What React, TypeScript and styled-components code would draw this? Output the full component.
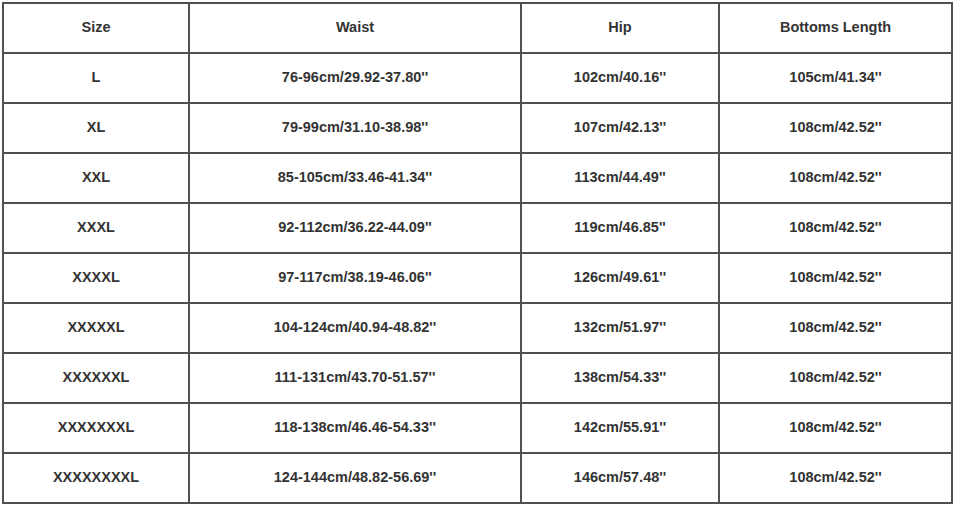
import React from "react";
import styled, { createGlobalStyle } from "styled-components";

const Global = createGlobalStyle`
  html, body { margin: 0; padding: 0; background: #ffffff; }
  body { font-family: "Liberation Sans", Arial, sans-serif; }
`;

const Page = styled.div`
  padding: 2px 0 0 2px;
`;

const Table = styled.div`
  display: grid;
  grid-template-columns: 184px 330px 196px 231px;
  grid-auto-rows: 48px;
  gap: 2px;
  width: max-content;
  background: #505050;
  border: 2px solid #505050;
`;

const Cell = styled.div`
  display: flex;
  align-items: center;
  justify-content: center;
  padding-bottom: 2px;
  box-sizing: border-box;
  background: #ffffff;
  color: #333333;
  font-family: "Liberation Sans", Arial, sans-serif;
  font-weight: bold;
  font-size: 14.5px;
  white-space: nowrap;
`;

const headers = ["Size", "Waist", "Hip", "Bottoms Length"];

const rows: string[][] = [
  ["L", "76-96cm/29.92-37.80''", "102cm/40.16''", "105cm/41.34''"],
  ["XL", "79-99cm/31.10-38.98''", "107cm/42.13''", "108cm/42.52''"],
  ["XXL", "85-105cm/33.46-41.34''", "113cm/44.49''", "108cm/42.52''"],
  ["XXXL", "92-112cm/36.22-44.09''", "119cm/46.85''", "108cm/42.52''"],
  ["XXXXL", "97-117cm/38.19-46.06''", "126cm/49.61''", "108cm/42.52''"],
  ["XXXXXL", "104-124cm/40.94-48.82''", "132cm/51.97''", "108cm/42.52''"],
  ["XXXXXXL", "111-131cm/43.70-51.57''", "138cm/54.33''", "108cm/42.52''"],
  ["XXXXXXXL", "118-138cm/46.46-54.33''", "142cm/55.91''", "108cm/42.52''"],
  ["XXXXXXXXL", "124-144cm/48.82-56.69''", "146cm/57.48''", "108cm/42.52''"],
];

export default function App() {
  return (
    <>
      <Global />
      <Page>
        <Table>
          {headers.map((h) => (
            <Cell key={h}>{h}</Cell>
          ))}
          {rows.map((r) =>
            r.map((c, i) => <Cell key={r[0] + i}>{c}</Cell>)
          )}
        </Table>
      </Page>
    </>
  );
}
